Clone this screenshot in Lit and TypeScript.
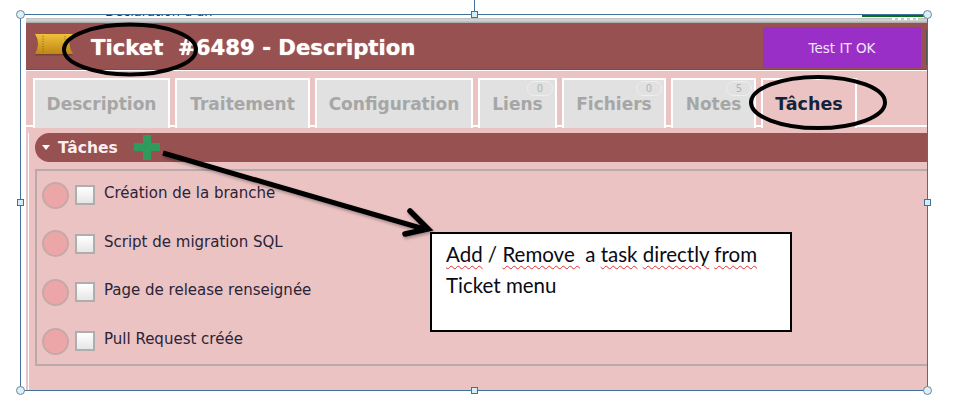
import { LitElement, html, css, svg } from "lit";
import { customElement } from "lit/decorators.js";

const TABS = [
  { label: "Description", w: 137 },
  { label: "Traitement", w: 135 },
  { label: "Configuration", w: 158 },
  { label: "Liens", w: 79, badge: "0" },
  { label: "Fichiers", w: 104, badge: "0" },
  { label: "Notes", w: 85, badge: "5" },
];
const TASKS = ["Création de la branche", "Script de migration SQL", "Page de release renseignée", "Pull Request créée"];
const SQUARES = [[474, 14], [20, 202], [927, 202], [474, 390]];
const CIRCLES = [[20, 14], [927, 14], [20, 390], [927, 390]];

@customElement("app-root")
export class AppRoot extends LitElement {
  static styles = css`
    :host { display: block; position: relative; width: 962px; height: 408px; background: #fff; overflow: hidden; font-family: "DejaVu Sans", sans-serif; }
    .frame { position: absolute; left: 20px; top: 14px; width: 908px; height: 377px; box-sizing: border-box; border: 1px solid #41719c; display: flex; flex-direction: column; background: #fff; overflow: hidden; }
    .strip { height: 8px; flex: none; display: flex; flex-direction: column; padding-left: 5px; }
    .strip-white { height: 3px; background: #fff; display: flex; overflow: hidden; }
    .sliver { flex: none; margin-left: 79px; width: 757px; font: 13px/1 "DejaVu Sans", sans-serif; color: #333; transform: translateY(-10px); white-space: nowrap; }
    .green { flex: none; width: 63px; height: 2px; background: #0b6e1a; }
    .strip-gray { flex: 1; background: linear-gradient(#b9b9b9, #d8d8d8 40%, #a9a9a9); display: flex; justify-content: flex-end; padding-right: 9px; }
    .dots { width: 26px; height: 2px; background: repeating-linear-gradient(90deg, #fff 0 3px, transparent 3px 6px); }
    .shot { flex: 1; margin-left: 5px; display: flex; flex-direction: column; min-height: 0; background: #ebc3c3; }
    .head { height: 47px; flex: none; background: #975151; display: flex; align-items: center; padding: 3px 0 0 8px; border-bottom: 1px solid #8a4545; box-sizing: border-box; }
    .ticket { width: 40px; height: 24px; flex: none; margin-right: 17px; margin-top: -8px; }
    .title { flex: 1; font-weight: 700; font-size: 21.2px; color: #fff; white-space: pre; text-shadow: 0 0 1px #ffe9d0; padding-bottom: 1px; }
    .btn { width: 158px; height: 41px; background: #9a2fc8; color: #f2e6f7; font-size: 13.5px; display: flex; align-items: center; justify-content: center; }
    .edge { width: 1px; height: 35px; margin-left: 5px; background: #555; flex: none; }
    .tabs { flex: none; height: 57px; padding: 7px 0 0 7px; box-sizing: border-box; border-top: 1px solid #fff; border-bottom: 2px solid #fff; display: flex; gap: 5px; margin-bottom: 6px; }
    .tab { position: relative; box-sizing: border-box; height: 50px; border: 2px solid #fff; border-bottom: none; background: #e1e1e1; color: #a6a6a6; font-weight: 700; font-size: 17px; display: flex; align-items: center; justify-content: center; }
    .tab.active { width: 96px; background: #ebc3c3; color: #14233c; font-size: 17.5px; border-color: #fff; }
    .badge { position: absolute; top: 1px; right: 2px; width: 26px; height: 15px; border: 1.5px solid #efefef; border-radius: 8px; box-sizing: border-box; font-size: 10px; font-weight: 400; color: #b4b4b4; display: flex; align-items: center; justify-content: center; }
    .panel { flex: 1; margin-left: 2px; border-left: 1px solid #fff; padding-left: 6px; display: flex; flex-direction: column; }
    .sec { height: 29px; flex: none; background: #975151; border-radius: 15px 0 0 15px; display: flex; align-items: center; color: #fbeeee; font-weight: 700; font-size: 15.5px; padding-left: 7px; gap: 8px; }
    .sec-label { padding-top: 1px; }
    .caret { width: 0; height: 0; border: 4.5px solid transparent; border-top: 5px solid #fff; border-bottom: none; }
    .list { margin-top: 7px; height: 197px; box-sizing: border-box; border: 2px solid #b8aaaa; border-right: none; display: flex; flex-direction: column; }
    .row { height: 48.6px; flex: none; display: flex; align-items: center; padding-left: 5px; }
    .dot { width: 27px; height: 27px; border-radius: 50%; box-sizing: border-box; background: #eda6a8; border: 2px solid #c5a9a9; flex: none; }
    .box { width: 20px; height: 20px; box-sizing: border-box; margin-left: 6px; border: 2px solid #aeaeae; background: linear-gradient(#fff, #e6e6e6); flex: none; }
    .task { margin-left: 9px; font-size: 15px; color: #2a2438; padding-bottom: 4px; white-space: nowrap; }
    .ovl { position: absolute; left: 0; top: 0; width: 962px; height: 408px; pointer-events: none; }
    .arrow { filter: drop-shadow(1px 2px 1.5px rgba(0,0,0,.3)); }
    .note { position: absolute; left: 430px; top: 232px; width: 362px; height: 100px; box-sizing: border-box; border: 2px solid #000; background: #fff; padding: 5px 14px; font: 20.5px/31px Lato, sans-serif; color: #0a0a14; white-space: pre; }
    .sp { text-decoration: underline wavy #e03030 1px; text-underline-offset: 3px; }
    .vline { position: absolute; left: 474px; top: 0; width: 1px; height: 14px; background: #41719c; }
    .sq { position: absolute; width: 7px; height: 7px; box-sizing: border-box; border: 1px solid #41719c; background: #d5eef6; transform: translate(-3px, -3px); }
    .ci { position: absolute; width: 9px; height: 9px; box-sizing: border-box; border: 1px solid #6f8698; border-radius: 50%; background: #d9f1f6; transform: translate(-4px, -4px); }
  `;

  private ticket() {
    return svg`<svg class="ticket" viewBox="0 0 40 24">
      <defs><linearGradient id="g" x1="0" y1="0" x2="0" y2="1"><stop offset="0" stop-color="#f0c23a"/><stop offset="1" stop-color="#bf8516"/></linearGradient></defs>
      <path d="M1 2H39Q32 12 39 22H1Q7 12 1 2Z" fill="#5a3a1c" opacity=".55" transform="translate(0 1.5)"/>
      <path d="M1 2H39Q32 12 39 22H1Q7 12 1 2Z" fill="url(#g)"/>
      <path d="M9 4V20M31 4V20" stroke="#8a5e12" stroke-dasharray="1 1.5" fill="none"/>
    </svg>`;
  }

  render() {
    return html`
      <div class="frame">
        <div class="strip">
          <div class="strip-white"><span class="sliver">Declaration d'un</span><span class="green"></span></div>
          <div class="strip-gray"><span class="dots"></span></div>
        </div>
        <div class="shot">
          <div class="head">
            ${this.ticket()}
            <div class="title">Ticket  #6489 - Description</div>
            <div class="btn">Test IT OK</div>
            <span class="edge"></span>
          </div>
          <div class="tabs">
            ${TABS.map(t => html`<div class="tab" style="width:${t.w}px">${t.label}${t.badge ? html`<span class="badge">${t.badge}</span>` : ""}</div>`)}
            <div class="tab active">Tâches</div>
          </div>
          <div class="panel">
            <div class="sec"><span class="caret"></span><span class="sec-label">Tâches</span></div>
            <div class="list">
              ${TASKS.map(t => html`<div class="row"><span class="dot"></span><span class="box"></span><span class="task">${t}</span></div>`)}
            </div>
          </div>
        </div>
      </div>
      <div class="vline"></div>
      ${SQUARES.map(([x, y]) => html`<span class="sq" style="left:${x}px;top:${y}px"></span>`)}
      ${CIRCLES.map(([x, y]) => html`<span class="ci" style="left:${x}px;top:${y}px"></span>`)}
      <svg class="ovl" viewBox="0 0 962 408">
        <ellipse cx="130" cy="49.5" rx="66" ry="25" fill="none" stroke="#000" stroke-width="4"/>
        <ellipse cx="818" cy="102.5" rx="67" ry="25.5" fill="none" stroke="#000" stroke-width="4"/>
        <path d="M134 143H143V135H151V143H160V151H151V160H143V151H134Z" fill="#2f9a5c"/>
        <g class="arrow">
          <path d="M163 153L424 229" stroke="#000" stroke-width="5" fill="none"/>
          <path d="M410 211L428 229L405 234" stroke="#000" stroke-width="5.5" stroke-linecap="round" fill="none"/>
        </g>
      </svg>
      <div class="note"><span class="sp">Add</span> / <span class="sp">Remove </span> a <span class="sp">task</span> <span class="sp">directly</span> <span class="sp">from</span>
Ticket menu</div>
    `;
  }
}
